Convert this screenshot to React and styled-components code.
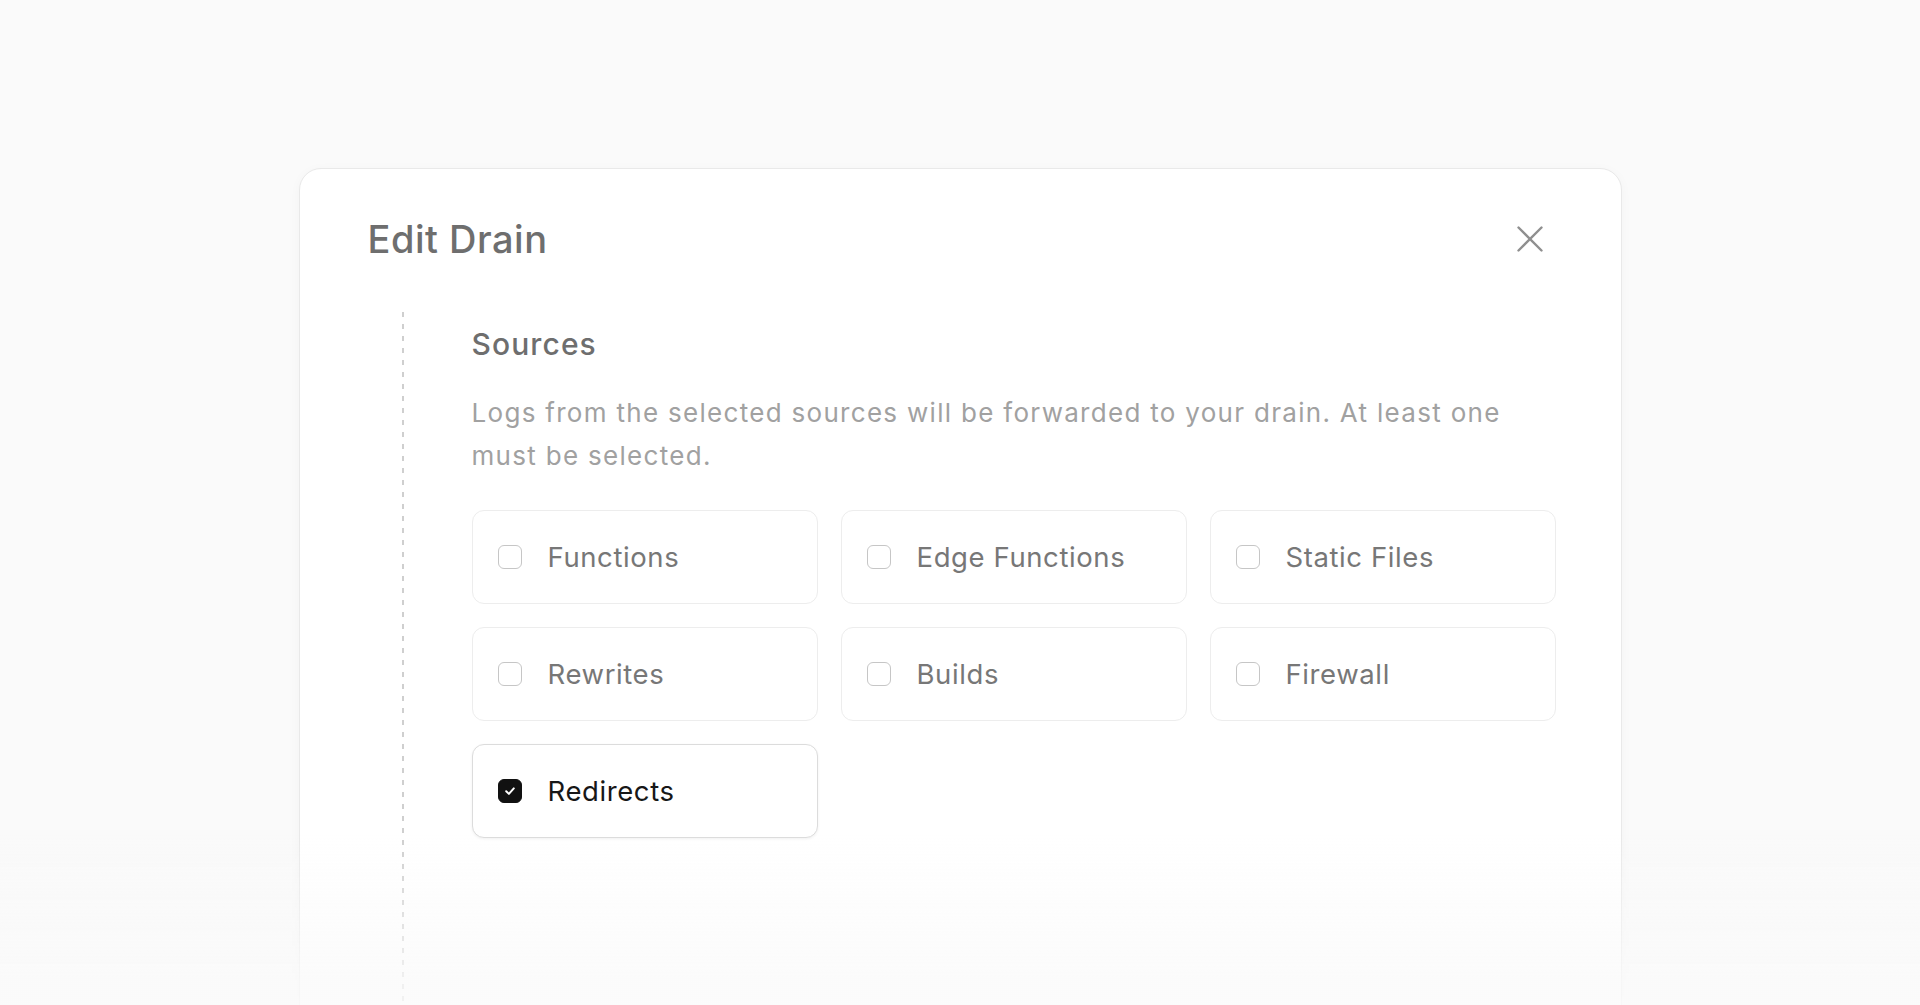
import React, { useState } from "react";
import styled, { createGlobalStyle, css } from "styled-components";

const GlobalStyle = createGlobalStyle`
  html, body {
    margin: 0;
    padding: 0;
    background: #fafafa;
    font-family: Inter, "Noto Sans", "Liberation Sans", sans-serif;
    -webkit-font-smoothing: antialiased;
  }
  body {
    height: 1005px;
    overflow: hidden;
  }
`;

const Page = styled.main`
  height: 1005px;
  overflow: hidden;
  padding-top: 168px;
  box-sizing: border-box;
`;

const Dialog = styled.section`
  width: 1323px;
  margin: 0 auto;
  box-sizing: border-box;
  min-height: 860px;
  background: #ffffff;
  border: 1px solid #e9e9e9;
  border-radius: 22px;
  box-shadow: 0 2px 12px rgba(0, 0, 0, 0.03);
  padding: 47px 64px 0 68px;
`;

const Header = styled.header`
  display: flex;
  align-items: center;
  justify-content: space-between;
  height: 46px;
`;

const Title = styled.h2`
  margin: 0;
  font-size: 38px;
  line-height: 46px;
  font-weight: 500;
  color: #6e6e6e;
  letter-spacing: 0.5px;
`;

const CloseButton = styled.button`
  width: 40px;
  height: 40px;
  margin-right: 7px;
  padding: 0;
  border: 0;
  background: transparent;
  display: flex;
  align-items: center;
  justify-content: center;
  color: #8f8f8f;
  cursor: pointer;
`;

const Step = styled.div`
  margin-top: 50px;
  margin-left: 34px;
  padding: 14px 0 0 70px;
  min-height: 700px;
  background-image: linear-gradient(to bottom, #cfcfcf 42%, transparent 42%);
  background-size: 1.5px 12px;
  background-repeat: repeat-y;
  background-position: left top;
`;

const SectionTitle = styled.h3`
  margin: 0;
  font-size: 30px;
  line-height: 36px;
  font-weight: 500;
  color: #6e6e6e;
  letter-spacing: 1.1px;
`;

const Description = styled.p`
  margin: 29px 0 0;
  max-width: 1060px;
  font-size: 26px;
  line-height: 43px;
  font-weight: 400;
  color: #a1a1a1;
  letter-spacing: 1.3px;
`;

const SourceGrid = styled.div`
  margin-top: 33px;
  display: grid;
  grid-template-columns: repeat(3, 346px);
  grid-auto-rows: 94px;
  gap: 23px 23px;
`;

const SourceOption = styled.label`
  display: flex;
  align-items: center;
  gap: 26px;
  box-sizing: border-box;
  padding: 0 0 0 25px;
  background: #ffffff;
  border: 1px solid #ededed;
  border-radius: 12px;
  cursor: pointer;
  ${(p) =>
    p.$checked &&
    css`
      border-color: #dcdcdc;
      box-shadow: 0 1px 3px rgba(0, 0, 0, 0.06);
    `}
`;

const Box = styled.span`
  width: 24px;
  height: 24px;
  box-sizing: border-box;
  border-radius: 6px;
  flex: none;
  display: flex;
  align-items: center;
  justify-content: center;
  border: 1.5px solid #c6c6c6;
  background: #ffffff;
  ${(p) =>
    p.$checked &&
    css`
      border-color: #111111;
      background: #111111;
    `}
`;

const Label = styled.span`
  font-size: 27.5px;
  line-height: 34px;
  font-weight: 400;
  letter-spacing: 0.6px;
  color: ${(p) => (p.$checked ? "#171717" : "#777777")};
`;

const Fade = styled.div`
  position: fixed;
  left: 0;
  right: 0;
  bottom: 0;
  height: 170px;
  pointer-events: none;
  background: linear-gradient(
    to bottom,
    rgba(250, 250, 250, 0) 0%,
    rgba(250, 250, 250, 0.75) 85%,
    rgba(250, 250, 250, 0.8) 100%
  );
`;

const sources = [
  "Functions",
  "Edge Functions",
  "Static Files",
  "Rewrites",
  "Builds",
  "Firewall",
  "Redirects",
];

function CheckIcon() {
  return (
    <svg width="14" height="14" viewBox="0 0 14 14" fill="none">
      <path
        d="M3.2 7.3 L5.9 9.9 L10.8 4.4"
        stroke="#ffffff"
        strokeWidth="2"
        strokeLinecap="round"
        strokeLinejoin="round"
      />
    </svg>
  );
}

function CloseIcon() {
  return (
    <svg width="26" height="26" viewBox="0 0 26 26" fill="none">
      <path
        d="M1.5 1.5 L24.5 24.5 M24.5 1.5 L1.5 24.5"
        stroke="currentColor"
        strokeWidth="2.4"
        strokeLinecap="round"
      />
    </svg>
  );
}

export default function App() {
  const [selected, setSelected] = useState(["Redirects"]);

  const toggle = (name) =>
    setSelected((prev) =>
      prev.includes(name) ? prev.filter((n) => n !== name) : [...prev, name]
    );

  return (
    <>
      <GlobalStyle />
      <Page>
        <Dialog role="dialog" aria-label="Edit Drain">
          <Header>
            <Title>Edit Drain</Title>
            <CloseButton aria-label="Close">
              <CloseIcon />
            </CloseButton>
          </Header>
          <Step>
            <SectionTitle>Sources</SectionTitle>
            <Description>
              Logs from the selected sources will be forwarded to your drain. At
              least one must be selected.
            </Description>
            <SourceGrid>
              {sources.map((name) => {
                const checked = selected.includes(name);
                return (
                  <SourceOption
                    key={name}
                    $checked={checked}
                    onClick={() => toggle(name)}
                  >
                    <Box $checked={checked}>{checked && <CheckIcon />}</Box>
                    <Label $checked={checked}>{name}</Label>
                  </SourceOption>
                );
              })}
            </SourceGrid>
          </Step>
        </Dialog>
        <Fade />
      </Page>
    </>
  );
}
